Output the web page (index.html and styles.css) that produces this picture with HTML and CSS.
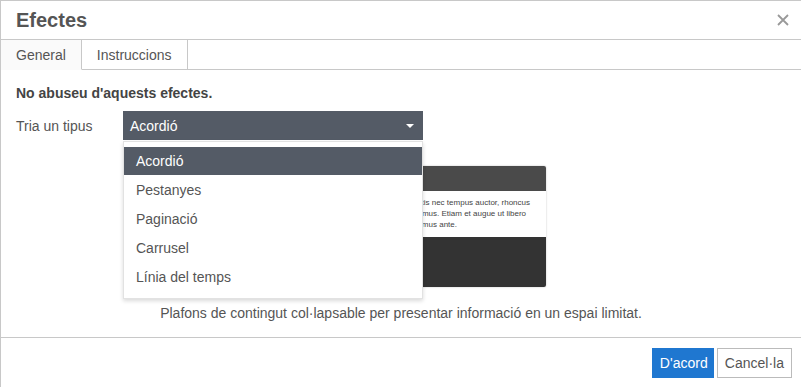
FILE: index.html
```html
<!DOCTYPE html>
<html lang="ca">
<head>
    <meta charset="UTF-8">
    <meta name="viewport" content="width=device-width, initial-scale=1.0">
    <title>Efectes</title>
    <link rel="stylesheet" href="styles.css">
</head>
<body>
    <div class="dialog">
        <div class="dialog-header">
            <h1>Efectes</h1>
            <button class="close" title="Tanca">
                <svg width="12" height="12" viewBox="0 0 12 12"><path d="M1 1L11 11M11 1L1 11" stroke="#999" stroke-width="1.8" fill="none"/></svg>
            </button>
        </div>

        <div class="tabs">
            <div class="tab active">General</div>
            <div class="tab">Instruccions</div>
            <div class="tab-fill"></div>
        </div>

        <div class="dialog-body">
            <p class="warning">No abuseu d'aquests efectes.</p>

            <div class="field">
                <label>Tria un tipus</label>
                <div class="select-wrap">
                    <div class="select">
                        <span>Acordió</span>
                        <svg class="caret" width="8" height="4" viewBox="0 0 8 4"><path d="M0 0H8L4 4Z" fill="#fff"/></svg>
                    </div>
                    <ul class="options">
                        <li class="selected">Acordió</li>
                        <li>Pestanyes</li>
                        <li>Paginació</li>
                        <li>Carrusel</li>
                        <li>Línia del temps</li>
                    </ul>
                </div>
            </div>

            <div class="preview">
                <div class="preview-head"></div>
                <div class="preview-text">
                    <div class="line">Lorem ipsum dolor sit amet, consectetur mattis nec tempus auctor, rhoncus</div>
                    <div class="line">nisi vel sapien aliquam, varius erat maximus. Etiam et augue ut libero</div>
                    <div class="line short">consequat interdum, vitae maximus ante.</div>
                </div>
                <div class="preview-foot"></div>
            </div>

            <p class="caption">Plafons de contingut col·lapsable per presentar informació en un espai limitat.</p>
        </div>

        <div class="dialog-footer">
            <button class="btn primary">D'acord</button>
            <button class="btn">Cancel·la</button>
        </div>
    </div>
</body>
</html>
```

FILE: styles.css
```css
body {
    margin: 0;
    font-family: 'Liberation Sans', Arial, sans-serif;
    font-size: 14px;
    color: #444;
    background-color: #fff;
}
.dialog {
    border: 1px solid #c8c8c8;
    border-right: none;
    background-color: #fff;
}
.dialog-header {
    display: flex;
    align-items: center;
    justify-content: space-between;
    height: 38px;
    padding: 0 12px 0 15px;
    border-bottom: 1px solid #c8c8c8;
}
h1 {
    margin: 0;
    font-size: 20px;
    font-weight: bold;
    color: #555;
}
.close {
    border: none;
    background: none;
    padding: 0;
    width: 12px;
    height: 12px;
    display: flex;
    cursor: pointer;
}
.tabs {
    display: flex;
    height: 30px;
}
.tab {
    display: flex;
    align-items: center;
    padding: 0 15px;
    border-right: 1px solid #c8c8c8;
    border-bottom: 1px solid #c8c8c8;
    color: #555;
}
.tab.active {
    background-color: #fafafa;
    border-bottom-color: transparent;
}
.tab-fill {
    flex: 1;
    border-bottom: 1px solid #c8c8c8;
}
.dialog-body {
    padding: 13px 15px 14px;
    border-bottom: 1px solid #c8c8c8;
}
.warning {
    margin: 0;
    line-height: 20px;
    font-weight: bold;
}
.field {
    display: flex;
    align-items: center;
    margin-top: 8px;
}
.field label {
    width: 107px;
    color: #555;
}
.select-wrap {
    position: relative;
    width: 300px;
}
.select {
    display: flex;
    align-items: center;
    justify-content: space-between;
    height: 29px;
    padding: 0 9px 0 7px;
    background-color: #545b66;
    color: #fff;
}
.options {
    position: absolute;
    top: 30px;
    left: 0;
    width: 298px;
    margin: 0;
    padding: 5px 0 6px;
    list-style: none;
    background-color: #fff;
    border: 1px solid #e2e2e2;
    box-shadow: 0 2px 4px rgba(0, 0, 0, 0.15);
    z-index: 2;
}
.options li {
    height: 29px;
    line-height: 29px;
    padding-left: 12px;
    color: #555;
}
.options li.selected {
    height: 28px;
    line-height: 28px;
    margin-bottom: 1px;
    background-color: #545b66;
    color: #fff;
}
.preview {
    width: 290px;
    margin: 26px auto 0;
    border-radius: 2px;
    overflow: hidden;
    box-shadow: 0 0 2px rgba(0, 0, 0, 0.25);
}
.preview-head {
    height: 25px;
    background-color: #4a4a4a;
}
.preview-text {
    height: 46px;
    box-sizing: border-box;
    padding-top: 6px;
    font-size: 8px;
    line-height: 11px;
    white-space: nowrap;
    overflow: hidden;
    color: #444;
    background-color: #fff;
}
.line {
    display: flex;
    justify-content: flex-end;
    padding-right: 16px;
}
.line + .line {
    padding-right: 20px;
}
.line.short {
    padding-right: 89px;
}
.preview-foot {
    height: 50px;
    background-color: #333;
}
.caption {
    margin: 16px 0 0;
    line-height: 20px;
    text-align: center;
    color: #555;
}
.dialog-footer {
    display: flex;
    justify-content: flex-end;
    gap: 3px;
    padding: 10px 9px 9px;
}
.btn {
    height: 30px;
    padding: 0 7px;
    font-family: 'Liberation Sans', Arial, sans-serif;
    font-size: 14px;
    color: #555;
    background-color: #fff;
    border: 1px solid #bbb;
}
.btn.primary {
    width: 62px;
    background-color: #1f77d0;
    border-color: #1f77d0;
    color: #fff;
}
```
